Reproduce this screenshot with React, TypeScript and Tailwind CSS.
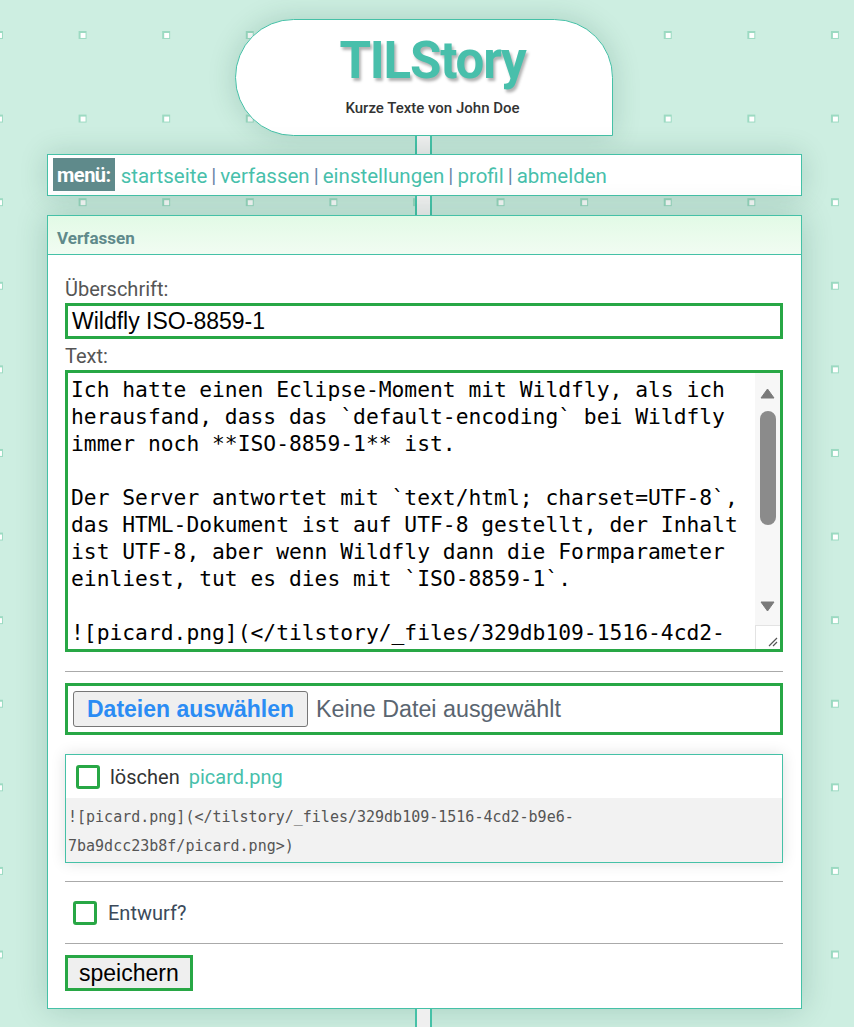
import React from "react";

const sans = "font-['Roboto','Noto_Sans',sans-serif]";
const arial = "font-['Liberation_Sans',Arial,sans-serif]";
const mono = "font-['DejaVu_Sans_Mono','Liberation_Mono',monospace]";

const textLines = [
  "Ich hatte einen Eclipse-Moment mit Wildfly, als ich",
  "herausfand, dass das `default-encoding` bei Wildfly",
  "immer noch **ISO-8859-1** ist.",
  "",
  "Der Server antwortet mit `text/html; charset=UTF-8`,",
  "das HTML-Dokument ist auf UTF-8 gestellt, der Inhalt",
  "ist UTF-8, aber wenn Wildfly dann die Formparameter",
  "einliest, tut es dies mit `ISO-8859-1`.",
  "",
  "![picard.png](</tilstory/_files/329db109-1516-4cd2-",
];

const menuLinks = ["startseite", "verfassen", "einstellungen", "profil", "abmelden"];

function Connector() {
  return (
    <div className="ml-[368px] w-[17px] h-full bg-[#efefef] border-x-2 border-[#45c1a7]" />
  );
}

function Checkbox() {
  return <span className="block w-[24px] h-[24px] border-[3px] border-[#28a745] rounded-[3px] bg-white" />;
}

export default function App() {
  return (
    <div
      className={`min-h-screen w-full bg-white bg-[image:linear-gradient(to_bottom,transparent_8px,#cdeee1_8px),linear-gradient(to_right,transparent_8px,#cdeee1_8px),linear-gradient(to_right,#9cdac2_1.5px,transparent_1.5px,transparent_6.5px,#9cdac2_6.5px),linear-gradient(to_bottom,#9cdac2_1.5px,transparent_1.5px,transparent_6.5px,#9cdac2_6.5px)] bg-[size:83.6px_83.6px] bg-[position:-5px_31px] ${sans}`}
    >
      <div className="ml-[47px] w-[755px] pt-[19px]">
        {/* header */}
        <div className="ml-[188px] w-[378px] h-[117px] pl-[17px] bg-white border border-[#45c1a7] rounded-tl-[60px] rounded-tr-[60px] rounded-bl-[60px] shadow-[0_0_28px_rgba(0,70,50,0.18)] flex flex-col items-center">
          <h1 className="mt-[12px] text-[51px] leading-[58px] font-bold tracking-[-1.2px] text-[#48bfab] [text-shadow:2px_3px_3px_rgba(0,0,0,0.3)]">
            TILStory
          </h1>
          <p className="mt-[9px] text-[15px] leading-[18px] font-medium text-[#333]">
            Kurze Texte von John Doe
          </p>
        </div>

        <div className="h-[18px]">
          <Connector />
        </div>

        {/* menu */}
        <nav className="h-[42px] bg-white border border-[#45c1a7] shadow-[0_0_28px_rgba(0,70,50,0.18)] pl-[5px] pt-[3px] flex items-start">
          <span className="h-[33px] px-[4px] bg-[#5f8a8b] text-white font-bold text-[20px] leading-[35px] tracking-[-0.5px]">
            menü:
          </span>
          <div className="ml-[6px] text-[20.5px] leading-[37px] text-[#48bfab]">
            {menuLinks.map((l, i) => (
              <span key={l}>
                {i > 0 && <span className="text-[#6b86a8] mx-[4px]">|</span>}
                <a href="#" className="text-[#48bfab]">{l}</a>
              </span>
            ))}
          </div>
        </nav>

        <div className="h-[19px]">
          <Connector />
        </div>

        {/* panel */}
        <section className="bg-white border border-[#45c1a7] shadow-[0_0_30px_rgba(0,70,50,0.2)]">
          <div className="h-[39px] border-b border-[#45c1a7] bg-gradient-to-b from-[#e2fae6] to-[#f1fcf2] px-[9px] pt-[7px] flex items-center">
            <span className="text-[17px] font-bold text-[#5f8a8b]">Verfassen</span>
          </div>

          <div className="pl-[17px] pr-[18px] pt-[21px] pb-[17px]">
            <label className="block text-[20px] leading-[23px] pt-[2px] text-[#555]">Überschrift:</label>
            <div className="mt-[2px] h-[36px] border-[3px] border-[#28a745] flex items-center pl-[4px]">
              <span className={`${arial} text-[23px] text-black`}>Wildfly ISO-8859-1</span>
            </div>

            <label className="block mt-[5px] text-[20px] leading-[23px] pt-[1px] text-[#555]">Text:</label>
            <div className="mt-[2px] h-[282px] border-[3px] border-[#28a745] flex overflow-hidden">
              <div className={`flex-1 pt-[3px] pl-[3px] ${mono} text-[21.3px] leading-[27px] text-black whitespace-pre overflow-hidden`}>
                {textLines.map((t, i) => (
                  <div key={i} className="h-[27px]">{t}</div>
                ))}
              </div>
              <div className="w-[25px] flex flex-col bg-[#f7f7f7]">
                <div className="h-[252px] flex flex-col items-center">
                  <svg width="15" height="11" viewBox="0 0 15 11" className="mt-[15px]">
                    <path d="M7.5 1 L14 10 L1 10 Z" fill="#7a7a7a" stroke="#7a7a7a" strokeLinejoin="round" />
                  </svg>
                  <div className="mt-[12px] w-[16px] h-[114px] rounded-full bg-[#8b8b8b]" />
                  <div className="flex-1" />
                  <svg width="15" height="11" viewBox="0 0 15 11" className="mb-[13px]">
                    <path d="M1 1 L14 1 L7.5 10 Z" fill="#7a7a7a" stroke="#7a7a7a" strokeLinejoin="round" />
                  </svg>
                </div>
                <div className="flex-1 bg-white border-t border-l border-[#e3e3e3] flex items-end justify-end">
                  <svg width="12" height="12" viewBox="0 0 12 12" className="mb-[2px] mr-[2px]">
                    <path d="M11 3 L3 11 M11 7 L7 11" stroke="#555" strokeWidth="1.2" />
                  </svg>
                </div>
              </div>
            </div>

            <hr className="mt-[19px] border-0 border-t border-[#aaa]" />

            <div className="mt-[11px] h-[52px] border-[3px] border-[#28a745] flex items-center pl-[5px]">
              <button className={`${arial} h-[36px] px-[13px] bg-[#efefef] border border-[#767676] rounded-[3px] text-[23px] font-bold text-[#2b8cf4]`}>
                Dateien auswählen
              </button>
              <span className={`${arial} ml-[8px] text-[23.3px] text-[#5a6570]`}>Keine Datei ausgewählt</span>
            </div>

            <div className="mt-[19px] border border-[#45c1a7] shadow-[0_0_14px_rgba(0,0,0,0.12)]">
              <div className="h-[43px] flex items-center pl-[10px]">
                <Checkbox />
                <span className="ml-[10px] text-[20px] text-[#333]">löschen</span>
                <a href="#" className="ml-[9px] text-[20px] text-[#48bfab]">picard.png</a>
              </div>
              <div className={`bg-[#f2f2f2] pt-[5px] pb-[1px] pl-[2px] ${mono} text-[15px] leading-[29px] text-[#555]`}>
                <div>![picard.png](&lt;/tilstory/_files/329db109-1516-4cd2-b9e6-</div>
                <div>7ba9dcc23b8f/picard.png&gt;)</div>
              </div>
            </div>

            <hr className="mt-[18px] border-0 border-t border-[#aaa]" />

            <div className="h-[61px] flex items-center pl-[8px]">
              <Checkbox />
              <span className="ml-[11px] text-[20px] text-[#3b4a5a]">Entwurf?</span>
            </div>

            <hr className="border-0 border-t border-[#aaa]" />

            <button className={`${arial} mt-[11px] h-[36px] px-[11px] bg-[#efefef] border-[3px] border-[#28a745] text-[23px] text-black leading-[28px]`}>
              speichern
            </button>
          </div>
        </section>

        <div className="h-[19px]">
          <Connector />
        </div>
      </div>
    </div>
  );
}
